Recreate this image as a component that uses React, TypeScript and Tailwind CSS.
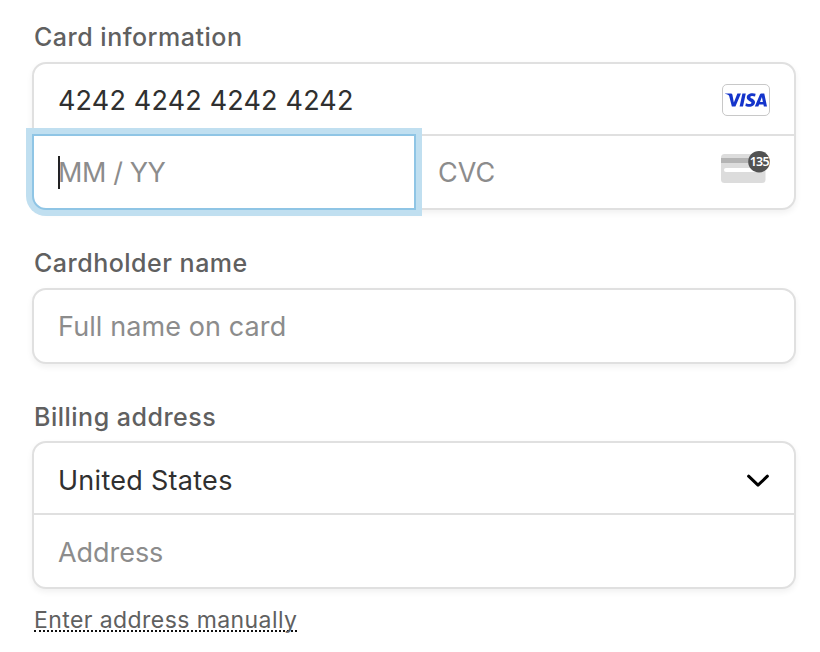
import type { ReactNode } from "react";
import { SiVisa } from "react-icons/si";

const boxClass =
  "flex w-[764px] flex-col rounded-[14px] border-2 border-[#e0e0e0] bg-white shadow-[0_3px_6px_rgba(0,0,0,0.06)]";

function Label({ children, className }: { children: ReactNode; className: string }) {
  return (
    <div className={`h-8 whitespace-nowrap pl-0.5 text-[25px] leading-8 font-medium text-[#606060] ${className}`}>
      {children}
    </div>
  );
}

function VisaBadge() {
  return (
    <div className="flex h-8 w-12 items-center justify-center rounded-[5px] border border-[#c8c8c8] bg-white">
      <SiVisa className="mr-px mb-px size-[42px] shrink-0 text-[#1434cb]" />
    </div>
  );
}

function CvcIcon() {
  return (
    <svg width="50" height="36" viewBox="0 0 50 36">
      <rect x="0" y="4" width="44.5" height="29" rx="3.5" fill="#dcdcdc" />
      <rect x="0" y="8" width="44.5" height="5" fill="#b4b4b4" />
      <rect x="3" y="18" width="36" height="4" rx="2" fill="#fff" />
      <circle cx="38" cy="11.7" r="10.8" fill="#525252" />
      <text x="38.3" y="16" textAnchor="middle" fontFamily="Noto Sans, sans-serif" fontSize="12.5" fontWeight="600" letterSpacing="-0.8" fill="#fff">
        135
      </text>
    </svg>
  );
}

export default function App() {
  return (
    <main className="flex h-[652px] w-[820px] flex-col overflow-hidden bg-white pl-8 font-['Inter',sans-serif] text-[27px] leading-8 text-[#303030]">
      <Label className="mt-[21px] tracking-[0.5px]">Card information</Label>
      <section className={`${boxClass} mt-[9px] h-[148px]`}>
        <div className="flex h-[70px] items-center justify-between pt-0.5 pr-6 pl-6">
          <span className="pt-0.5 tracking-[0.17px]">4242 4242 4242 4242</span>
          <VisaBadge />
        </div>
        <div className="-mx-0.5 -mb-0.5 flex h-[76px] text-[#8c8c8c]">
          <div className="z-10 flex w-[384px] items-center rounded-bl-[14px] border-2 border-[#8fc5e5] bg-white pl-6 shadow-[0_0_0_6px_#c0dff0]">
            <span className="-mr-0.5 h-[33px] w-0.5 bg-[#222]" />
            <span className="pt-0.5 tracking-[-0.4px]">MM / YY</span>
          </div>
          <div className="flex flex-1 items-center justify-between border-t-2 border-[#e0e0e0] pr-[25px] pl-[22px]">
            <span>CVC</span>
            <div className="mb-2.5">
              <CvcIcon />
            </div>
          </div>
        </div>
      </section>
      <Label className="mt-[37px] tracking-[0.5px]">Cardholder name</Label>
      <section className={`${boxClass} mt-[9px] h-[76px] justify-center pl-6 text-[#8c8c8c]`}>
        <span className="pt-0.5 tracking-[0.1px]">Full name on card</span>
      </section>
      <Label className="mt-[37px] tracking-[0.5px]">Billing address</Label>
      <section className={`${boxClass} mt-2 h-[148px]`}>
        <div className="flex h-[72px] items-center justify-between border-b-2 border-[#e0e0e0] pr-6 pl-6">
          <span className="pt-1.5 tracking-[0.28px]">United States</span>
          <svg className="mt-1.5" width="24" height="16" viewBox="0 0 24 16" fill="none" stroke="#000" strokeWidth="3" strokeLinecap="round" strokeLinejoin="round">
            <path d="M2.6 3.2 12 12.2l9.4-9" />
          </svg>
        </div>
        <div className="flex flex-1 items-center pt-1 pl-6 text-[#8c8c8c]">
          <span className="tracking-[-0.05px]">Address</span>
        </div>
      </section>
      <div className="mt-4 ml-0.5 h-[27px] self-start border-b-2 border-dotted border-[#111] text-[23px] leading-[30px] whitespace-nowrap text-[#606060]">
        <span className="tracking-[0.42px]">Enter address manually</span>
      </div>
    </main>
  );
}
